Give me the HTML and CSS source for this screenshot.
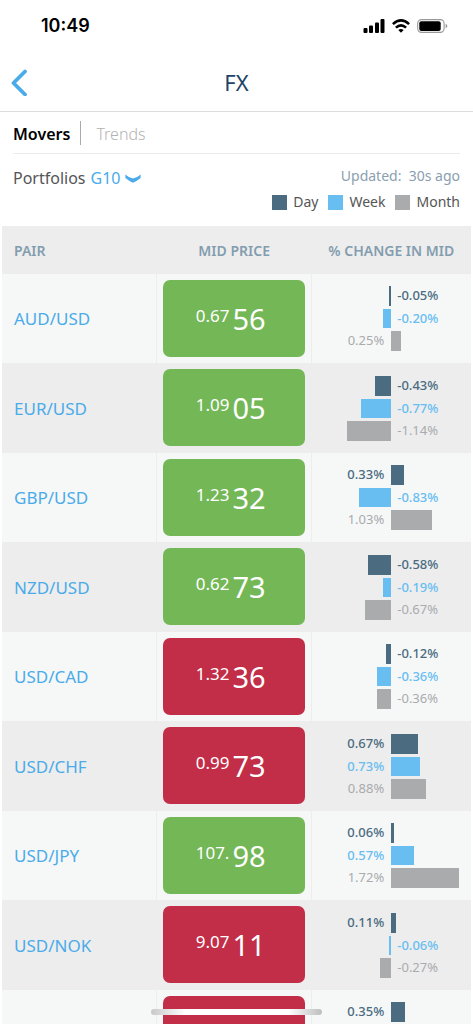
FILE: index.html
```html
<!DOCTYPE html>
<html lang="en">
<head>
<meta charset="utf-8">
<meta name="viewport" content="width=device-width, initial-scale=1">
<title>FX</title>
<link rel="stylesheet" href="styles.css">
</head>
<body>
<div class="app">
  <div class="status">
    <span class="clock">10:49</span>
    <span class="status-icons">
      <svg width="22" height="14" viewBox="0 0 22 14" aria-hidden="true"><rect x="0.5" y="9" width="4" height="5" rx="1"/><rect x="6" y="6.5" width="4" height="7.5" rx="1"/><rect x="12" y="3.5" width="4" height="10.5" rx="1"/><rect x="17.5" y="0" width="4" height="14" rx="1"/></svg>
      <svg width="18" height="14" viewBox="0 0 18 14" aria-hidden="true"><g fill="none" stroke="#000" stroke-width="2.6"><path d="M0.9 5.1Q9-2.3 17.1 5.1"/><path d="M3.9 8.6Q9 4 14.1 8.6"/></g><path d="M6.3 11Q9 8.8 11.7 11L9 13.8Z"/></svg>
      <svg width="31" height="14" viewBox="0 0 31 14" aria-hidden="true"><rect x="0.7" y="0.6" width="26.4" height="12.8" rx="3.8" fill="none" stroke="#999" stroke-width="1.1"/><rect x="2.3" y="2.2" width="21.4" height="9.8" rx="2"/><path d="M28.6 4.8Q30.4 5.6 30.4 7T28.6 9.2Z" fill="#999"/></svg>
    </span>
  </div>

  <header class="navbar">
    <button class="back" type="button" aria-label="Back"><svg width="18" height="28" viewBox="0 0 18 28" aria-hidden="true"><path d="M15 3.5L3.5 15L15 26.5" fill="none" stroke="#4aabea" stroke-width="3.8" stroke-linecap="round" stroke-linejoin="round"/></svg></button>
    <h1 class="title">FX</h1>
  </header>

  <nav class="tabs">
    <a class="tab tab-active" href="#movers" aria-current="page">Movers</a>
    <a class="tab" href="#trends">Trends</a>
  </nav>

  <section class="filters">
    <div class="portfolio">
      <span>Portfolios</span>
      <button class="picker" type="button" aria-haspopup="listbox" aria-label="Portfolio G10">G10 <svg width="16" height="9" viewBox="0 0 16 9" aria-hidden="true"><path d="M0.4 0.4Q4 3.8 8 4.6Q12 3.8 15.6 0.4V4Q12 7 8 8.8Q4 7 0.4 4Z" fill="#4aabea"/></svg></button>
    </div>
    <div class="meta">
      <p class="updated">Updated:&nbsp; 30s ago</p>
      <ul class="legend">
        <li class="day">Day</li>
        <li class="week">Week</li>
        <li class="month">Month</li>
      </ul>
    </div>
  </section>

  <main class="scroller">
    <table class="rates">
      <thead>
        <tr><th class="pair-head" scope="col">PAIR</th><th scope="col">MID PRICE</th><th scope="col">% CHANGE IN MID</th></tr>
      </thead>
      <tbody>
        <tr>
          <td><a class="pair" href="#audusd">AUD/USD</a></td>
          <td class="price-cell"><button class="price up" type="button"><span class="lead">0.67</span><span class="pips">56</span></button></td>
          <td><div class="changes">
            <div class="change neg day"><span class="value">-0.05%</span><i class="bar" style="width:3%"></i></div>
            <div class="change neg week"><span class="value">-0.20%</span><i class="bar" style="width:10%"></i></div>
            <div class="change month"><span class="value">0.25%</span><i class="bar" style="width:12%"></i></div>
          </div></td>
        </tr>
        <tr>
          <td><a class="pair" href="#eurusd">EUR/USD</a></td>
          <td class="price-cell"><button class="price up" type="button"><span class="lead">1.09</span><span class="pips">05</span></button></td>
          <td><div class="changes">
            <div class="change neg day"><span class="value">-0.43%</span><i class="bar" style="width:21%"></i></div>
            <div class="change neg week"><span class="value">-0.77%</span><i class="bar" style="width:38%"></i></div>
            <div class="change neg month"><span class="value">-1.14%</span><i class="bar" style="width:56%"></i></div>
          </div></td>
        </tr>
        <tr>
          <td><a class="pair" href="#gbpusd">GBP/USD</a></td>
          <td class="price-cell"><button class="price up" type="button"><span class="lead">1.23</span><span class="pips">32</span></button></td>
          <td><div class="changes">
            <div class="change day"><span class="value">0.33%</span><i class="bar" style="width:16%"></i></div>
            <div class="change neg week"><span class="value">-0.83%</span><i class="bar" style="width:41%"></i></div>
            <div class="change month"><span class="value">1.03%</span><i class="bar" style="width:51%"></i></div>
          </div></td>
        </tr>
        <tr>
          <td><a class="pair" href="#nzdusd">NZD/USD</a></td>
          <td class="price-cell"><button class="price up" type="button"><span class="lead">0.62</span><span class="pips">73</span></button></td>
          <td><div class="changes">
            <div class="change neg day"><span class="value">-0.58%</span><i class="bar" style="width:29%"></i></div>
            <div class="change neg week"><span class="value">-0.19%</span><i class="bar" style="width:10%"></i></div>
            <div class="change neg month"><span class="value">-0.67%</span><i class="bar" style="width:33%"></i></div>
          </div></td>
        </tr>
        <tr>
          <td><a class="pair" href="#usdcad">USD/CAD</a></td>
          <td class="price-cell"><button class="price down" type="button"><span class="lead">1.32</span><span class="pips">36</span></button></td>
          <td><div class="changes">
            <div class="change neg day"><span class="value">-0.12%</span><i class="bar" style="width:6%"></i></div>
            <div class="change neg week"><span class="value">-0.36%</span><i class="bar" style="width:18%"></i></div>
            <div class="change neg month"><span class="value">-0.36%</span><i class="bar" style="width:18%"></i></div>
          </div></td>
        </tr>
        <tr>
          <td><a class="pair" href="#usdchf">USD/CHF</a></td>
          <td class="price-cell"><button class="price down" type="button"><span class="lead">0.99</span><span class="pips">73</span></button></td>
          <td><div class="changes">
            <div class="change day"><span class="value">0.67%</span><i class="bar" style="width:33%"></i></div>
            <div class="change week"><span class="value">0.73%</span><i class="bar" style="width:36%"></i></div>
            <div class="change month"><span class="value">0.88%</span><i class="bar" style="width:43%"></i></div>
          </div></td>
        </tr>
        <tr>
          <td><a class="pair" href="#usdjpy">USD/JPY</a></td>
          <td class="price-cell"><button class="price up" type="button"><span class="lead">107.</span><span class="pips">98</span></button></td>
          <td><div class="changes">
            <div class="change day"><span class="value">0.06%</span><i class="bar" style="width:3%"></i></div>
            <div class="change week"><span class="value">0.57%</span><i class="bar" style="width:28%"></i></div>
            <div class="change month"><span class="value">1.72%</span><i class="bar" style="width:85%"></i></div>
          </div></td>
        </tr>
        <tr>
          <td><a class="pair" href="#usdnok">USD/NOK</a></td>
          <td class="price-cell"><button class="price down" type="button"><span class="lead">9.07</span><span class="pips">11</span></button></td>
          <td><div class="changes">
            <div class="change day"><span class="value">0.11%</span><i class="bar" style="width:6%"></i></div>
            <div class="change neg week"><span class="value">-0.06%</span><i class="bar" style="width:3%"></i></div>
            <div class="change neg month"><span class="value">-0.27%</span><i class="bar" style="width:14%"></i></div>
          </div></td>
        </tr>
        <tr>
          <td></td>
          <td class="price-cell"><button class="price down" type="button" aria-label="Price"></button></td>
          <td><div class="changes">
            <div class="change day"><span class="value">0.35%</span><i class="bar" style="width:17%"></i></div>
          </div></td>
        </tr>
      </tbody>
    </table>
  </main>
  <div class="home-indicator"></div>
</div>
</body>
</html>
```

FILE: styles.css
```css
* { box-sizing: border-box; }

body {
  margin: 0;
  background: #fff;
  color: #555;
  font-family: "Noto Sans", "Open Sans", sans-serif;
  font-size: 14px;
}

button {
  margin: 0;
  padding: 0;
  border: 0;
  background: none;
  font: inherit;
  cursor: pointer;
}

a { text-decoration: none; }
svg { display: block; }

.app {
  position: relative;
  display: flex;
  flex-direction: column;
  height: 100vh;
  overflow: hidden;
}

/* Status bar */
.status {
  flex: none;
  display: flex;
  align-items: center;
  justify-content: space-between;
  height: 52px;
  padding: 0 25px 0 41px;
}
.clock {
  color: #000;
  font: 600 18px/24px Inter, sans-serif;
}
.status-icons {
  display: flex;
  gap: 7px;
}

/* Title bar */
.navbar {
  flex: none;
  display: grid;
  grid-template-columns: 1fr auto 1fr;
  align-items: center;
  height: 60px;
  padding: 0 10px;
  border-bottom: 1px solid #dcdcdc;
}
.back { justify-self: start; }
.title {
  margin: 0;
  color: #1d4468;
  font-size: 22px;
  font-weight: 400;
  line-height: 28px;
}

/* Tabs */
.tabs {
  flex: none;
  display: flex;
  align-items: center;
  height: 42px;
  margin: 0 13px;
  border-bottom: 1px solid #ececec;
}
.tab {
  padding-top: 2px;
  color: #b4b4b4;
  font-size: 16px;
  font-weight: 300;
  line-height: 22px;
}
.tab-active {
  margin-right: 15px;
  padding-right: 10px;
  border-right: 1px solid #aaa;
  color: #000;
  font-weight: 600;
}

/* Portfolio picker and legend */
.filters {
  flex: none;
  display: flex;
  justify-content: space-between;
  height: 72px;
  padding: 12px 13px 0;
}
.portfolio {
  display: flex;
  align-items: center;
  gap: 5px;
  height: 24px;
  font-size: 16px;
}
.picker {
  display: flex;
  align-items: center;
  gap: 5px;
  color: #4aabea;
}
.updated {
  margin: 0;
  color: #8aa0b0;
  line-height: 20px;
  text-align: right;
}
.legend {
  display: flex;
  gap: 10px;
  margin: 6px 0 0;
  padding: 0;
  list-style: none;
  line-height: 20px;
}
.legend li {
  display: flex;
  align-items: center;
  gap: 6px;
}
.legend li::before {
  content: "";
  width: 15px;
  height: 15px;
  background: var(--series);
}
.day { --series: #4a6b80; }
.week { --series: #68bdf1; }
.month { --series: #a9abad; }

/* Rates table */
.scroller {
  flex: 1;
  min-height: 0;
  padding: 0 2px;
  overflow-y: auto;
  scrollbar-width: none;
}
.rates {
  width: 100%;
  table-layout: fixed;
  border-collapse: separate;
  border-spacing: 0;
}
th {
  height: 48px;
  padding: 0;
  background: #ededed;
  color: #839daf;
  font-weight: 600;
}
th:nth-child(1),
th:nth-child(2) { width: 33%; }
.pair-head {
  padding-left: 12px;
  text-align: left;
}
td {
  height: 90px;
  padding: 0;
  border-right: 1px solid #ededed;
}
td:last-child { border-right: 0; }
tr:nth-child(odd) td {
  height: 89px;
  background: #f6f8f8;
}
tr:nth-child(even) td { background: #ededed; }

.pair {
  padding-left: 12px;
  color: #4aabea;
  font-size: 17px;
}
.price-cell {
  padding: 6px;
  vertical-align: top;
}
.price {
  display: flex;
  justify-content: center;
  gap: 3px;
  width: 100%;
  height: 77px;
  padding: 19px 6px 0 0;
  border-radius: 7px;
  color: #fff;
}
.up { background: #74b757; }
.down { background: #c22d47; }
.lead {
  font-size: 17px;
  line-height: 34px;
}
.pips {
  font-size: 29px;
  line-height: 40px;
}

/* Change chart: bars grow from the centre line */
.changes {
  display: grid;
  grid-template-rows: 20px 19px 20px;
  gap: 3px;
}
.change {
  display: grid;
  grid-template-columns: 1fr 1fr;
  color: var(--series);
  font-size: 13px;
  font-weight: 500;
  line-height: 19px;
}
.month .value { font-weight: 400; }
.value {
  grid-row: 1;
  grid-column: 1;
  padding: 0 7px;
  text-align: right;
}
.bar {
  grid-row: 1;
  grid-column: 2;
  background: var(--series);
}
.neg .value {
  grid-column: 2;
  padding: 0 6px;
  text-align: left;
}
.neg .bar {
  grid-column: 1;
  justify-self: end;
}

/* Home indicator */
.home-indicator {
  position: absolute;
  bottom: 9px;
  left: 50%;
  width: 36%;
  height: 6px;
  margin-left: -18%;
  border-radius: 3px;
  background: linear-gradient(90deg, #c8c8c8, #fff 20%, #fff 80%, #bebebe);
}
```
